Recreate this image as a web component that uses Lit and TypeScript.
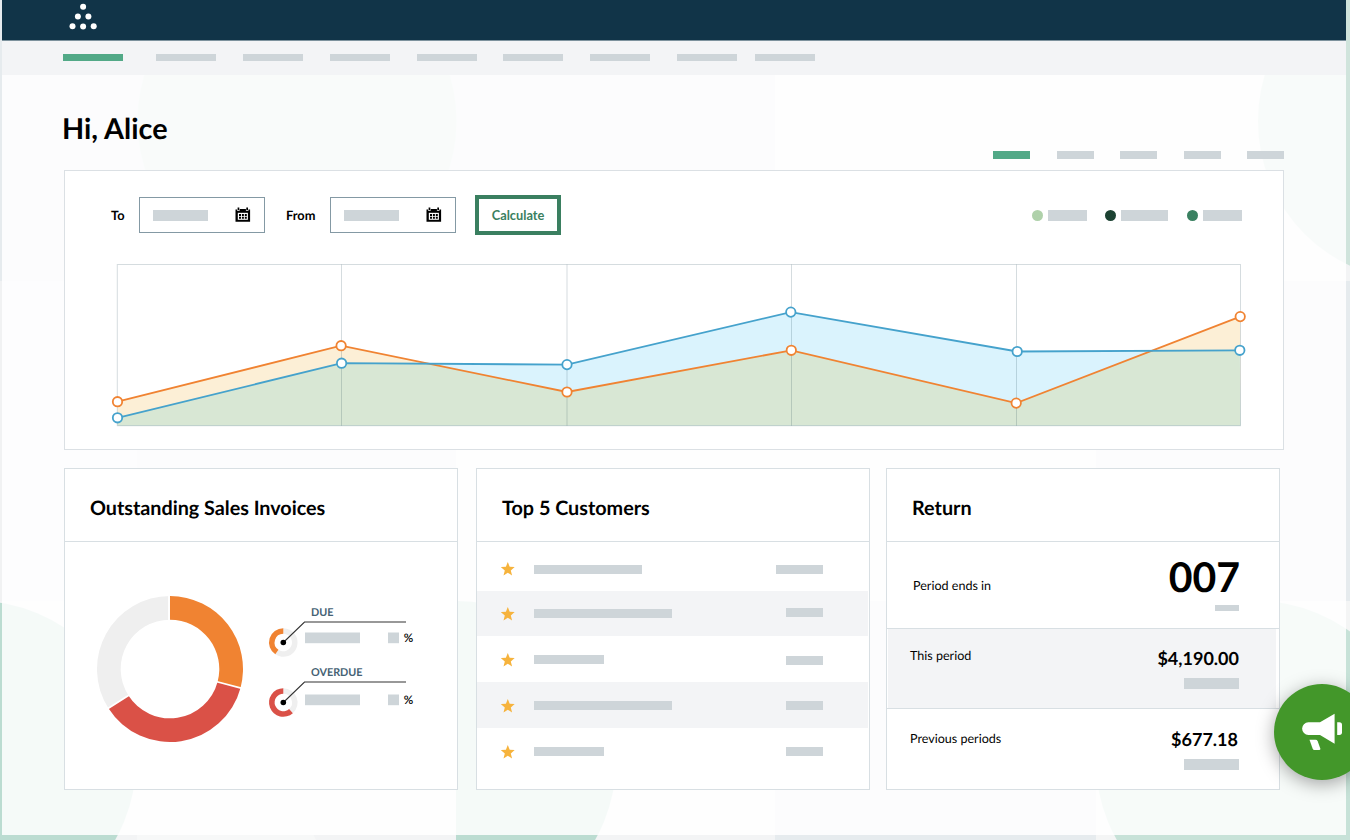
import { LitElement, html, css, svg } from "lit";
import { customElement, property } from "lit/decorators.js";

type Point = [number, number];

const GRID_X = [0.5, 224.5, 450, 674.5, 899.5, 1123.5];
const PLOT_TOP = 9.5;
const PLOT_BOTTOM = 170.7;
const ORANGE: Point[] = [
    [0.5, 146.7],
    [224.1, 90.7],
    [450, 137],
    [674.3, 95.3],
    [899.2, 148.1],
    [1123.2, 61.6],
];
const BLUE: Point[] = [
    [0.5, 162.8],
    [224.6, 108.2],
    [450, 109.6],
    [673.8, 57.1],
    [900.2, 96.5],
    [1122.8, 95.3],
];

const points = (p: Point[]) => p.map((xy) => xy.join(",")).join(" ");
const area = (p: Point[]) => `0.5,${PLOT_BOTTOM} ${points(p)} 1123.5,${PLOT_BOTTOM}`;

// ring slice between two angles, measured clockwise from the top
function slice(c: number, outer: number, inner: number, from: number, to: number) {
    const at = (r: number, deg: number) => {
        const a = ((deg - 90) * Math.PI) / 180;
        return `${(c + r * Math.cos(a)).toFixed(2)} ${(c + r * Math.sin(a)).toFixed(2)}`;
    };
    const large = to - from > 180 ? 1 : 0;
    return `M${at(outer, from)}A${outer} ${outer} 0 ${large} 1 ${at(outer, to)}L${at(inner, to)}A${inner} ${inner} 0 ${large} 0 ${at(inner, from)}Z`;
}

@customElement("line-chart")
class LineChart extends LitElement {
    render() {
        return html`
            <svg width="1136" height="180" viewBox="-6 0 1136 180">
                <clipPath id="under"><polygon points=${area(ORANGE)} /></clipPath>
                <polygon class="orange-area" points=${area(ORANGE)} />
                <polygon class="blue-area" points=${area(BLUE)} />
                <polygon class="both" points=${area(BLUE)} clip-path="url(#under)" />
                <rect
                    class="grid"
                    x="0.3"
                    y=${PLOT_TOP}
                    width="1123.2"
                    height=${PLOT_BOTTOM - PLOT_TOP} />
                ${GRID_X.slice(1, -1).map(
                    (x) => svg`<line class="grid" x1=${x} x2=${x} y1=${PLOT_TOP} y2=${PLOT_BOTTOM} />`
                )}
                <polyline class="orange" points=${points(ORANGE)} />
                <polyline class="blue" points=${points(BLUE)} />
                ${ORANGE.map(([x, y]) => svg`<circle class="orange dot" cx=${x} cy=${y} r="4.7" />`)}
                ${BLUE.map(([x, y]) => svg`<circle class="blue dot" cx=${x} cy=${y} r="4.7" />`)}
            </svg>
        `;
    }

    static styles = css`
        :host {
            display: block;
        }
        svg {
            display: block;
        }
        .orange-area {
            fill: #fcefd6;
        }
        .blue-area {
            fill: #daf3fd;
        }
        .both {
            fill: #d8e7d4;
        }
        .grid {
            fill: none;
            stroke: rgba(20, 60, 80, 0.18);
        }
        .orange,
        .blue {
            fill: none;
            stroke-width: 1.8;
        }
        .orange {
            stroke: #f08332;
        }
        .blue {
            stroke: #45a2cc;
        }
        .dot {
            fill: #fff;
        }
    `;
}

@customElement("invoice-callout")
class InvoiceCallout extends LitElement {
    @property() label = "";
    @property() color = "";
    @property({ type: Number }) from = 0;
    @property({ type: Number }) rise = 20.5;
    @property({ type: Number }) bar = 10.5;

    render() {
        const top = 29.5 - this.rise;
        return html`
            <svg width="150" height="46">
                <g transform="translate(0.7 14.9)">
                    <path fill="#efefef" d=${slice(14.6, 14.3, 8.7, 0, this.from)} />
                    <path fill=${this.color} d=${slice(14.6, 14.3, 8.7, this.from, 360)} />
                </g>
                <polyline points="15.3,29.5 36.5,${top} 138,${top}" />
                <circle cx="15.3" cy="29.5" r="2.8" />
                <text class="label" x="43" y=${top - 6}>${this.label}</text>
                <rect x="37" y=${top + this.bar} width="55" height="10.7" />
                <rect x="120" y=${top + this.bar} width="11" height="10.7" />
                <text class="unit" x="135.7" y=${top + this.bar + 9.4}>%</text>
            </svg>
        `;
    }

    static styles = css`
        :host {
            display: block;
            font-family: Lato, sans-serif;
            font-weight: 700;
            text-rendering: geometricPrecision;
        }
        svg {
            display: block;
            overflow: visible;
        }
        polyline {
            fill: none;
            stroke: #333;
            stroke-width: 1.1;
        }
        rect {
            fill: #ced5d9;
        }
        .label {
            font-size: 10.8px;
            fill: #456274;
        }
        .unit {
            font-size: 11.7px;
            font-weight: 600;
        }
    `;
}

@customElement("app-root")
class AppRoot extends LitElement {
    customers = [
        { height: 49, name: 108, total: 47, drop: 5, shift: 0 },
        { height: 45, name: 138, total: 37, drop: 0, shift: -1 },
        { height: 46, name: 70, total: 37, drop: 0, shift: 1 },
        { height: 46, name: 138, total: 37, drop: 0, shift: 0 },
        { height: 46, name: 70, total: 37, drop: 0, shift: 0 },
    ];

    render() {
        return html`
            ${this._backdrop()}
            <div class="window">
                <header>
                    <svg width="30" height="30" fill="#fff">
                        <circle cx="15.1" cy="6.8" r="3" />
                        <circle cx="9.9" cy="16.4" r="3" />
                        <circle cx="20.4" cy="16.4" r="3" />
                        <circle cx="4.5" cy="26.2" r="3" />
                        <circle cx="15.1" cy="26.4" r="3" />
                        <circle cx="25.7" cy="26.2" r="3" />
                    </svg>
                </header>
                <nav>${[...Array(9)].map(() => html`<i></i>`)}</nav>
                <div class="greeting">
                    <h1>Hi, Alice</h1>
                    <div class="tabs">${[...Array(5)].map(() => html`<i></i>`)}</div>
                </div>
                <section class="panel">
                    <div class="controls">
                        <label>To</label>
                        ${this._dateInput()}
                        <label class="from">From</label>
                        ${this._dateInput()}
                        <button>Calculate</button>
                        <div class="legend">
                            <b class="light"></b><i></i>
                            <b class="dark"></b><i class="wide"></i>
                            <b class="mid"></b><i></i>
                        </div>
                    </div>
                    <line-chart></line-chart>
                </section>
                <div class="cards">${this._invoices()} ${this._customers()} ${this._return()}</div>
            </div>
            <div class="fab">
                <svg width="42" height="38" fill="#fff">
                    <path d="M6.4 9.3h11.6L32.6.7v30L18 21.9H6.4a6.3 6.3 0 0 1 0-12.6z" />
                    <path d="M35.2 9.3h2.2q2.6 0 2.6 2.6v7.4q0 2.6-2.6 2.6h-2.2z" />
                    <path d="M7.5 26.8h6q1.6 0 2.2 1.4l2.5 7q.6 1.8-.8 1.8h-5q-1.2 0-1.7-1.2z" />
                </svg>
            </div>
        `;
    }

    _backdrop() {
        return html`
            <svg class="backdrop" width="1350" height="840">
                <rect width="1350" height="840" fill="#e6ebee" />
                <rect x="456" width="319" height="281" fill="#ebecee" />
                <rect x="775" width="321" height="601" fill="#f8f9f9" />
                <rect x="1096" width="254" height="281" fill="#f3f4f5" />
                <rect y="281" width="137" height="320" fill="#f1f2f3" />
                <rect x="456" y="281" width="319" height="320" fill="#f3f7f6" />
                <rect y="601" width="775" height="239" fill="#f3f4f5" />
                <rect x="1096" y="601" width="254" height="239" fill="#f4f5f5" />
                <circle cx="297" cy="121" r="159.5" fill="#d3e5df" />
                <circle cx="1418" cy="121" r="160" fill="#d0e4dc" />
                <circle cx="-24" cy="761" r="160" fill="#bbdcd1" />
                <path d="M456 601a160 160 0 0 1 0 320z" fill="#bbdcd1" />
                <path d="M137 601h163a300 300 0 0 0 16 239h-179z" fill="#f7f8f8" />
                <circle cx="1256" cy="761" r="160" fill="#c7e2d8" />
            </svg>
        `;
    }

    _dateInput() {
        return html`
            <div class="date">
                <i></i>
                <svg width="16" height="16">
                    <path d="M.5 2.4h1.6v1.3h2.6V1.9h6.2v1.8h2.6V2.4h1.6v12.4H.5z" />
                    <path d="M2.6.5h1.7v2.4H2.6zM11.3.5H13v2.4h-1.7z" />
                    <path fill="#fff" d="M2.8 5.8h10.1v7H2.8z" />
                    <path
                        d="M4 6.9h2v2H4zM6.9 6.9h2v2h-2zM9.8 6.9h2v2h-2zM4 9.8h2v2H4zM6.9 9.8h2v2h-2zM9.8 9.8h2v2h-2z" />
                </svg>
            </div>
        `;
    }

    _invoices() {
        return html`
            <section class="card">
                <h2 class="tight">Outstanding Sales Invoices</h2>
                <div class="invoices">
                    <svg width="148" height="148">
                        <path fill="#efefef" d=${slice(74, 73, 49.3, 237.5, 360)} />
                        <path fill="#f08332" d=${slice(74, 73, 49.3, 0, 105)} />
                        <path fill="#da5147" d=${slice(74, 73, 49.3, 105, 237.5)} />
                        <path
                            stroke="#fff"
                            stroke-width="1.8"
                            d="M73 0V26M120 86.5L147 93.7M34 99.5L10 114.8" />
                    </svg>
                    <div class="callouts">
                        <invoice-callout label="DUE" color="#f08332" from="214"></invoice-callout>
                        <invoice-callout
                            label="OVERDUE"
                            color="#da5147"
                            from="138"
                            bar="12.5"></invoice-callout>
                    </div>
                </div>
            </section>
        `;
    }

    _customers() {
        return html`
            <section class="card">
                <h2>Top 5 Customers</h2>
                ${this.customers.map(
                    (c) => html`
                        <div class="customer" style="height:${c.height}px;padding-top:${c.drop}px">
                            <svg width="14" height="15">
                                <path
                                    fill="#f6b33d"
                                    d="M6.8 .4l1.9 4.9 5 .3-3.9 3.3 1.3 5.1L6.8 11.2l-4.3 2.8 1.3-5.1L-.1 5.6l5-.3z" />
                            </svg>
                            <i style="width:${c.name}px"></i>
                            <i class="total" style="width:${c.total}px;translate:0 ${c.shift}px"></i>
                        </div>
                    `
                )}
            </section>
        `;
    }

    _return() {
        return html`
            <section class="card">
                <h2>Return</h2>
                <div class="period ends">
                    <span>Period ends in</span>
                    <div class="value"><strong>007</strong><i></i></div>
                </div>
                <div class="period current">
                    <span>This period</span>
                    <div class="value"><strong>$4,190.00</strong><i></i></div>
                </div>
                <div class="period previous">
                    <span>Previous periods</span>
                    <div class="value"><strong>$677.18</strong><i></i></div>
                </div>
            </section>
        `;
    }

    static styles = css`
        :host {
            display: block;
            position: relative;
            width: 1350px;
            height: 840px;
            overflow: hidden;
            font-family: Lato, "Liberation Sans", sans-serif;
            text-rendering: geometricPrecision;
            color: #000;
        }
        * {
            box-sizing: border-box;
        }
        svg {
            display: block;
            flex: none;
        }
        i {
            display: block;
            flex: none;
            background: #ced5d9;
        }
        .backdrop {
            position: absolute;
            inset: 0;
        }
        .window {
            position: relative;
            width: 1344px;
            height: 835px;
            margin-left: 2px;
            background: rgba(255, 255, 255, 0.85);
        }
        header {
            height: 41px;
            padding-left: 66px;
            background: #113448;
            border-bottom: 1px solid #7d929d;
        }
        nav {
            display: flex;
            gap: 27px;
            height: 34px;
            padding: 13px 0 0 61px;
            background: #f3f4f6;
        }
        nav i {
            width: 60px;
            height: 7px;
        }
        nav i:first-child {
            margin-right: 6px;
        }
        nav i:nth-child(6) {
            margin-left: -1px;
        }
        nav i:last-child {
            margin-left: -9px;
        }
        nav i:first-child,
        .tabs i:first-child {
            background: #52a987;
        }
        .greeting {
            display: flex;
            justify-content: space-between;
            align-items: flex-end;
            height: 95px;
            padding: 0 62px 11px 60px;
        }
        h1 {
            margin: 0 0 12px;
            font-size: 28.8px;
            line-height: 36px;
            font-weight: 700;
        }
        .tabs {
            display: flex;
            gap: 26.5px;
        }
        .tabs i {
            width: 37px;
            height: 8px;
        }
        .panel {
            width: 1220px;
            height: 280px;
            margin-left: 62px;
            background: #fff;
            border: 1px solid #dbe0e4;
        }
        .controls {
            display: flex;
            align-items: center;
            height: 88px;
            padding: 0 41px 0 46px;
        }
        label {
            width: 28px;
            font-size: 12.8px;
            font-weight: 700;
        }
        .from {
            width: 44px;
            margin-left: 21px;
        }
        .date {
            display: flex;
            align-items: center;
            justify-content: space-between;
            width: 126px;
            height: 36px;
            padding: 0 13px;
            border: 1px solid #8499a4;
        }
        .date i {
            width: 55px;
            height: 11px;
            margin-top: 1px;
        }
        button {
            width: 86px;
            height: 40px;
            margin-left: 19px;
            padding: 0;
            border: 4px solid #3a7f60;
            background: #fff;
            color: #3a7f60;
            font: 700 12.8px Lato, sans-serif;
        }
        .legend {
            display: flex;
            align-items: center;
            margin-left: auto;
        }
        .legend b {
            width: 11px;
            height: 11px;
            margin-right: 5px;
            border-radius: 50%;
        }
        .legend i {
            width: 39px;
            height: 11px;
        }
        .legend .wide {
            width: 47px;
        }
        .legend i:not(:last-child) {
            margin-right: 18px;
        }
        .legend .wide:not(:last-child) {
            margin-right: 19px;
        }
        .light {
            background: #afd1aa;
        }
        .dark {
            background: #1c4232;
        }
        .mid {
            background: #3a8161;
        }
        line-chart {
            margin: -4px 0 0 46px;
        }
        .cards {
            display: grid;
            grid-template-columns: 412px 410px 394px;
            margin: 18px 0 0 62px;
        }
        .card {
            width: 394px;
            height: 322px;
            background: #fff;
            border: 1px solid #d8dfe3;
        }
        h2 {
            height: 73px;
            margin: 0;
            padding: 3px 0 0 25px;
            font-size: 19.8px;
            line-height: 73px;
            font-weight: 700;
            border-bottom: 1px solid #d8dfe3;
        }
        .tight {
            letter-spacing: -0.02px;
        }
        .invoices {
            display: flex;
            padding: 53px 0 0 31px;
        }
        .callouts {
            display: flex;
            flex-direction: column;
            gap: 14px;
            margin-left: 24px;
            padding-top: 18px;
        }
        .customer {
            display: flex;
            align-items: center;
            padding-left: 24px;
            padding-right: 46px;
        }
        .customer:nth-child(odd) {
            background: #f3f4f6;
            margin-right: 1px;
            padding-right: 45px;
        }
        .customer svg {
            translate: 0 0.5px;
        }
        .customer:first-of-type svg {
            translate: 0 -0.5px;
        }
        .customer i {
            height: 9px;
            margin-left: 19px;
        }
        .customer .total {
            margin-left: auto;
        }
        .period {
            display: flex;
            justify-content: space-between;
            padding: 0 40px 0 23px;
            font-size: 12.55px;
            line-height: 16px;
        }
        .ends {
            height: 87px;
            padding-left: 26px;
            border-bottom: 1px solid #d8dfe3;
        }
        .ends span {
            margin-top: 36px;
        }
        .value {
            display: flex;
            flex-direction: column;
            align-items: flex-end;
        }
        .value i {
            width: 55px;
            height: 11px;
        }
        strong {
            font-size: 18px;
            font-weight: 700;
            line-height: 20px;
        }
        .ends strong {
            margin: 10px -1px 0 0;
            font-size: 41px;
            line-height: 50px;
        }
        .ends i {
            width: 24px;
            height: 6px;
            margin-top: 3px;
        }
        .current {
            height: 80px;
            background: linear-gradient(#f3f4f6, #f3f4f6) 1px 0 / calc(100% - 4px) 100% no-repeat;
            border-bottom: 1px solid #d8dfe3;
        }
        .current span {
            margin-top: 19px;
        }
        .current .value {
            padding-top: 19px;
        }
        .current i,
        .previous i {
            margin-top: 10px;
        }
        .previous span {
            margin-top: 22px;
        }
        .previous strong {
            margin-right: 1px;
        }
        .previous .value {
            padding-top: 20px;
        }
        .fab {
            position: absolute;
            left: 1274px;
            top: 684px;
            width: 96px;
            height: 96px;
            padding: 29px 0 0 28px;
            border-radius: 50%;
            background: #43972a;
            box-shadow: 0 4px 18px rgba(0, 0, 0, 0.35);
        }
    `;
}
